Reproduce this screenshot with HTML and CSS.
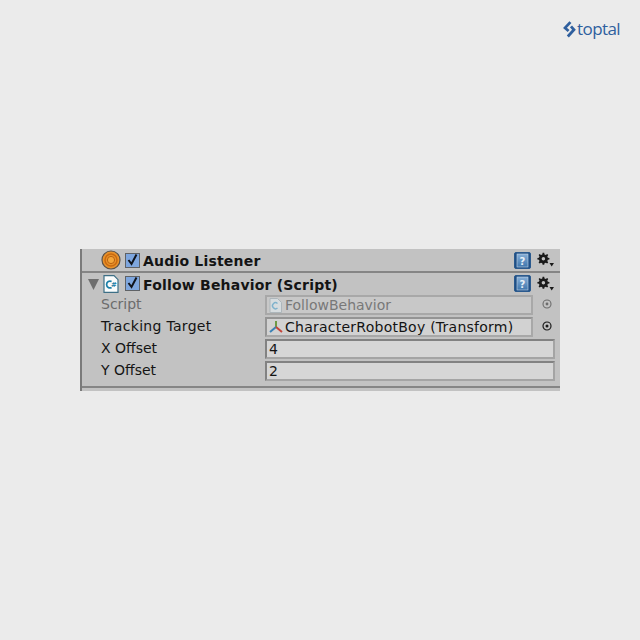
FILE: index.html
```html
<!DOCTYPE html>
<html lang="en">
<head>
<meta charset="utf-8">
<title>Follow Behavior</title>
<link rel="stylesheet" href="styles.css">
</head>
<body>
<svg class="defs" width="0" height="0">
  <defs>
    <linearGradient id="book" x1="0" y1="0" x2="0" y2="1"><stop offset="0" stop-color="#86aed6"/><stop offset="1" stop-color="#3f76ad"/></linearGradient>
    <g id="gear"><path d="M7 1 H9 L9.4 3 L11 3.7 L12.7 2.6 L14 3.9 L12.9 5.6 L13.6 7.2 L15.5 7.6 V9.4 L13.6 9.8 L12.9 11.4 L14 13.1 L12.7 14.4 L11 13.3 L9.4 14 L9 16 H7 L6.6 14 L5 13.3 L3.3 14.4 L2 13.1 L3.1 11.4 L2.4 9.8 L.5 9.4 V7.6 L2.4 7.2 L3.1 5.6 L2 3.9 L3.3 2.6 L5 3.7 L6.6 3 Z M8 6.3 A2.2 2.2 0 1 0 8 10.7 A2.2 2.2 0 1 0 8 6.3 Z" fill="#1a1a1a" fill-rule="evenodd" transform="scale(.8)"/><path d="M12.5 11 H17 L14.7 14.5 Z" fill="#1a1a1a"/></g>
    <g id="help"><rect x=".5" y=".5" width="16" height="16" rx="1.5" fill="#1f4f86" stroke="#2b5a8e"/><rect x="3" y="2" width="11" height="13" fill="url(#book)" stroke="#c6d6e6" stroke-width=".6"/><text x="8.5" y="12.5" class="q">?</text></g>
    <g id="tick"><rect x=".5" y=".5" width="14" height="14" fill="#7ea6de" stroke="#5f6266"/><path d="M3.5 7 L6.5 11 L11.5 1.5" fill="none" stroke="#10141c" stroke-width="2"/></g>
  </defs>
</svg>
<header class="brand">
  <svg class="brand-mark" width="13" height="19" viewBox="0 0 14 19"><path d="M8 1.5 L2.2 7.8 L6 11.2 M8.6 6.2 L11.8 9.8 L5.2 17" fill="none" stroke="#2f5f9e" stroke-width="3"/></svg>
  <span class="brand-name">toptal</span>
</header>
<main class="inspector">
  <section class="component first">
    <div class="title-row">
      <svg class="ico-audio" width="20" height="20" viewBox="0 0 20 20"><circle cx="10" cy="10" r="9" fill="#e8912a" stroke="#5c5248" stroke-width="1.2"/><circle cx="10" cy="10" r="6" fill="none" stroke="#c9690f" stroke-width="1.5"/><circle cx="10" cy="10" r="3.6" fill="#f4a63a" stroke="#b8610f"/></svg>
      <svg class="check" width="15" height="15" viewBox="0 0 15 15"><use href="#tick"/></svg>
      <strong class="title">Audio Listener</strong>
      <span class="tools">
        <svg width="17" height="17" viewBox="0 0 17 17"><use href="#help"/></svg>
        <svg width="17" height="16" viewBox="0 0 17 16"><use href="#gear"/></svg>
      </span>
    </div>
  </section>
  <section class="component">
    <div class="title-row">
      <svg class="fold" width="11" height="11" viewBox="0 0 11 11"><path d="M0 0 H11 L5.5 11 Z" fill="#6e6e6e"/></svg>
      <svg class="ico-script" width="16" height="18" viewBox="0 0 16 18"><path d="M1 .7 H11 L15 4.7 V17.3 H1 Z" fill="#fafcfc" stroke="#3d6f86" stroke-width="1.2"/><path d="M8.6 6.5 A3.4 3.4 0 1 0 8.6 12.5" fill="none" stroke="#1b7fa8" stroke-width="1.7"/><text x="8" y="12" class="hash">#</text></svg>
      <svg class="check" width="15" height="15" viewBox="0 0 15 15"><use href="#tick"/></svg>
      <strong class="title">Follow Behavior (Script)</strong>
      <span class="tools">
        <svg width="17" height="17" viewBox="0 0 17 17"><use href="#help"/></svg>
        <svg width="17" height="16" viewBox="0 0 17 16"><use href="#gear"/></svg>
      </span>
    </div>
    <div class="prop muted">
      <span class="label">Script</span>
      <span class="field ref">
        <svg width="13" height="15" viewBox="0 0 13 15"><path d="M1 .5 H8.5 L12.5 4.5 V14.5 H1 Z" fill="#d6dcdf" stroke="#adb6bb"/><path d="M8.5 5.5 A3 3 0 1 0 8.5 10" fill="none" stroke="#7fb2cc" stroke-width="1.4"/></svg>
        FollowBehavior
      </span>
      <svg class="target" width="10" height="10" viewBox="0 0 10 10"><circle cx="5" cy="5" r="4" fill="none" stroke="#6c6c6c" stroke-width="1.1"/><circle cx="5" cy="5" r="1.4" fill="#6c6c6c"/></svg>
    </div>
    <div class="prop">
      <span class="label label-wide">Tracking Target</span>
      <span class="field ref">
        <svg width="14" height="14" viewBox="0 0 14 14"><path d="M7 7 V1" stroke="#6f9a45" stroke-width="2"/><path d="M7 7 L1 12" stroke="#3b82b5" stroke-width="2"/><path d="M7 7 L13 12" stroke="#c4453a" stroke-width="2"/></svg>
        <span class="ref-wide">CharacterRobotBoy (Transform)</span>
      </span>
      <svg class="target" width="10" height="10" viewBox="0 0 10 10"><circle cx="5" cy="5" r="4" fill="none" stroke="#1c1c1c" stroke-width="1.2"/><circle cx="5" cy="5" r="1.5" fill="#1c1c1c"/></svg>
    </div>
    <div class="prop">
      <span class="label">X Offset</span>
      <span class="field num">4</span>
    </div>
    <div class="prop">
      <span class="label">Y Offset</span>
      <span class="field num">2</span>
    </div>
  </section>
</main>
</body>
</html>
```

FILE: styles.css
```css
* { box-sizing: border-box; }
html, body { margin: 0; height: 100%; }
body {
  background: #ebebeb;
  font-family: "DejaVu Sans", Verdana, sans-serif;
  font-size: 14px;
  color: #141414;
}
.defs { position: absolute; }
.brand {
  height: 249px;
  padding: 17px 20px 0 0;
  display: flex;
  justify-content: flex-end;
  align-items: flex-start;
  color: #2f5f9e;
}
.brand-mark { margin-top: 3px; margin-right: 1px; }
.brand-name {
  font-family: "Open Sans", sans-serif;
  font-size: 17px;
  line-height: 24px;
  letter-spacing: -.6px;
}
.inspector {
  width: 480px;
  height: 142px;
  margin-left: 80px;
  background: #c2c2c2;
  border-left: 2px solid #7a7a7a;
  padding-bottom: 3px;
  display: flex;
  flex-direction: column;
}
.component { border-bottom: 2px solid #858585; }
.component:last-child { flex: 1; }
.first { height: 24px; }
.title-row {
  height: 21px;
  display: flex;
  align-items: center;
  padding-right: 6px;
}
.first .title-row { height: 22px; padding-left: 19px; }
.first .title { padding-top: 2px; }
.ico-audio { flex: none; margin-right: 4px; }
.fold { flex: none; margin-left: 6px; margin-right: 4px; margin-top: 2px; }
.ico-script { flex: none; margin-right: 6px; }
.check { flex: none; margin-right: 3px; }
.title { font-weight: 700; letter-spacing: .2px; padding-top: 2px; white-space: nowrap; }
.tools { margin-left: auto; display: flex; align-items: center; gap: 6px; }
.q { font: 700 10px "DejaVu Sans", sans-serif; fill: #e8f0f8; text-anchor: middle; }
.hash { font: 700 7px "DejaVu Sans", sans-serif; fill: #1b7fa8; }
.prop {
  height: 22px;
  display: flex;
  align-items: flex-start;
  padding-left: 19px;
  padding-top: 1px;
}
.label { width: 164px; flex: none; line-height: 19px; white-space: nowrap; }
.label-wide { letter-spacing: .3px; }
.muted { color: #6c6c6c; }
.field {
  height: 20px;
  display: flex;
  align-items: center;
  background: #d2d2d2;
  border: 2px solid #949494;
  border-right-color: #a8a8a8;
  border-bottom-color: #a8a8a8;
  white-space: nowrap;
}
.ref { width: 268px; gap: 3px; padding-left: 2px; }
.ref-wide { letter-spacing: .25px; margin-left: -1px; }
.muted .field { background: #c8c8c8; border-color: #a8a8a8; color: #787878; }
.num { width: 290px; padding-left: 2px; background: #d6d6d6; border-color: #828282 #a4a4a4 #a4a4a4 #828282; }
.target { margin-left: 9px; margin-top: 4px; flex: none; }
```
